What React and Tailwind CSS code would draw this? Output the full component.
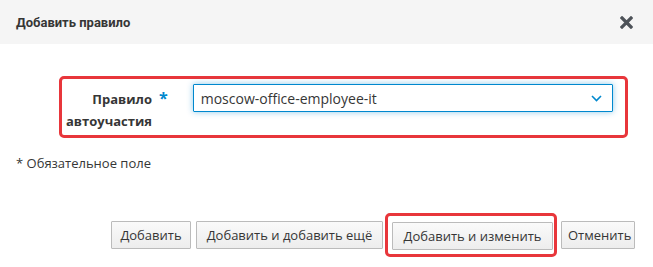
export default function App() {
  const btn =
    "h-[28px] px-[6px] border border-[#bbbbbb] rounded-[1px] bg-gradient-to-b from-[#fafafa] to-[#ededed] text-[#363636] text-[13px] leading-none";
  return (
    <div
      className="w-[653px] h-[267px] bg-white relative overflow-hidden"
      style={{ fontFamily: '"Open Sans", "Noto Sans", sans-serif' }}
    >
      <div className="h-[44px] bg-[#f5f5f5] flex items-center justify-between pl-[16px] pr-[20px]">
        <div
          className="text-[13px] font-bold text-[#363636] pt-[1px]"
          style={{ fontFamily: 'Roboto, "Open Sans", sans-serif' }}
        >
          Добавить правило
        </div>
        <svg width="13" height="13" viewBox="0 0 13 13">
          <path d="M2 2 L11 11 M11 2 L2 11" stroke="#4d5258" strokeWidth="3.2" strokeLinecap="square" />
        </svg>
      </div>

      <div className="ml-[59px] mt-[32px] w-[569px] h-[62px] border-[3px] border-[#e8363b] rounded-[5px] flex">
        <div className="flex pt-[9px] pl-[4px]">
          <div className="w-[86px] text-right font-bold text-[13px] leading-[22px] text-[#363636]">
            Правило автоучастия
          </div>
          <div className="ml-[7px] text-[#0088ce] font-bold text-[16px] leading-[20px]">*</div>
        </div>
        <div className="ml-[25px] mt-[5px] w-[420px] h-[28px] border border-[#0088ce] rounded-[1px] shadow-[0_0_6px_rgba(0,136,206,0.45)] flex items-center justify-between pl-[7px] pr-[10px]">
          <span className="text-[14px] text-[#363636]">moscow-office-employee-it</span>
          <svg width="11" height="7" viewBox="0 0 11 7">
            <path d="M1 1 L5.5 5.5 L10 1" stroke="#0088ce" strokeWidth="1.6" fill="none" />
          </svg>
        </div>
      </div>

      <div className="ml-[16px] mt-[16px] text-[13px] text-[#363636]">* Обязательное поле</div>

      <div className="absolute left-0 right-0 top-[213px] flex justify-end items-center pr-[18px]">
        <button className={btn + " w-[80px]"}>Добавить</button>
        <button className={btn + " ml-[5px] w-[187px]"}>Добавить и добавить ещё</button>
        <div className="ml-[2px] border-[3px] border-[#e8363b] rounded-[5px] pl-[4px] pr-[1px] pt-[6px] pb-[4px]">
          <button className={btn + " w-[161px] block"}>Добавить и изменить</button>
        </div>
        <button className={btn + " ml-[4px] w-[74px]"}>Отменить</button>
      </div>
    </div>
  );
}
